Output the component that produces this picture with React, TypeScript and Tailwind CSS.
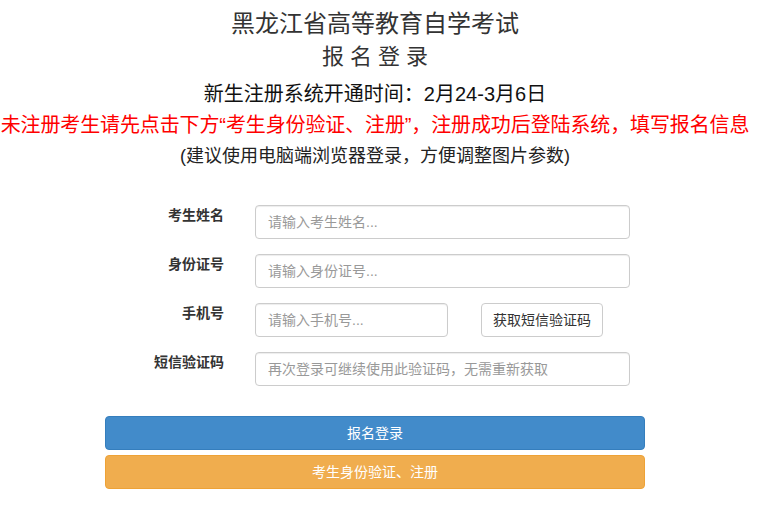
import React from "react";

const font = { fontFamily: '"Liberation Sans", "Noto Sans CJK SC", sans-serif' };

function Row({ label, children }: { label: string; children: React.ReactNode }) {
  return (
    <div className="flex items-start h-[34px]">
      <div className="w-[119px] text-right text-[14px] leading-[20px] font-bold text-[#333]">{label}</div>
      <div className="ml-[31px] flex items-start">{children}</div>
    </div>
  );
}

function Input({ placeholder, w }: { placeholder: string; w: string }) {
  return (
    <input
      placeholder={placeholder}
      className={`${w} h-[34px] px-[12px] border border-[#ccc] rounded-[4px] text-[14px] text-[#555] placeholder:text-[#999] outline-none bg-white shadow-[inset_0_1px_1px_rgba(0,0,0,0.075)]`}
      style={font}
    />
  );
}

export default function App() {
  return (
    <div className="w-[750px] bg-white min-h-[519px]" style={font}>
      <div className="pt-[8px] flex flex-col items-center">
        <div className="h-[32px] leading-[32px] text-[24px] text-[#333]">黑龙江省高等教育自学考试</div>
        <div className="h-[34px] leading-[34px] text-[22px] text-[#333] tracking-[6px] pl-[6px]">报名登录</div>
        <div className="mt-[4px] h-[32px] leading-[32px] text-[20px] text-[#111]">新生注册系统开通时间：2月24-3月6日</div>
        <div className="w-full flex justify-center h-[30px] leading-[30px]">
          <div className="whitespace-nowrap text-[20px] tracking-[-0.12px] text-[#ff0000] shrink-0">
            未注册考生请先点击下方“考生身份验证、注册”，注册成功后登陆系统，填写报名信息
          </div>
        </div>
        <div className="h-[32px] leading-[32px] text-[18px] text-[#222]">(建议使用电脑端浏览器登录，方便调整图片参数)</div>
      </div>

      <div className="w-[540px] mx-auto mt-[33px] flex flex-col gap-[15px]">
        <Row label="考生姓名">
          <Input placeholder="请输入考生姓名..." w="w-[375px]" />
        </Row>
        <Row label="身份证号">
          <Input placeholder="请输入身份证号..." w="w-[375px]" />
        </Row>
        <Row label="手机号">
          <Input placeholder="请输入手机号..." w="w-[193px]" />
          <button
            className="ml-[33px] w-[122px] h-[34px] border border-[#ccc] rounded-[4px] bg-white text-[14px] text-[#333]"
            style={font}
          >
            获取短信验证码
          </button>
        </Row>
        <Row label="短信验证码">
          <Input placeholder="再次登录可继续使用此验证码，无需重新获取" w="w-[375px]" />
        </Row>
      </div>

      <div className="w-[540px] mx-auto mt-[30px] flex flex-col gap-[5px]">
        <button className="h-[34px] w-full rounded-[4px] bg-[#428bca] border border-[#357ebd] text-white text-[14px]" style={font}>
          报名登录
        </button>
        <button className="h-[34px] w-full rounded-[4px] bg-[#f0ad4e] border border-[#eea236] text-white text-[14px]" style={font}>
          考生身份验证、注册
        </button>
      </div>
    </div>
  );
}
